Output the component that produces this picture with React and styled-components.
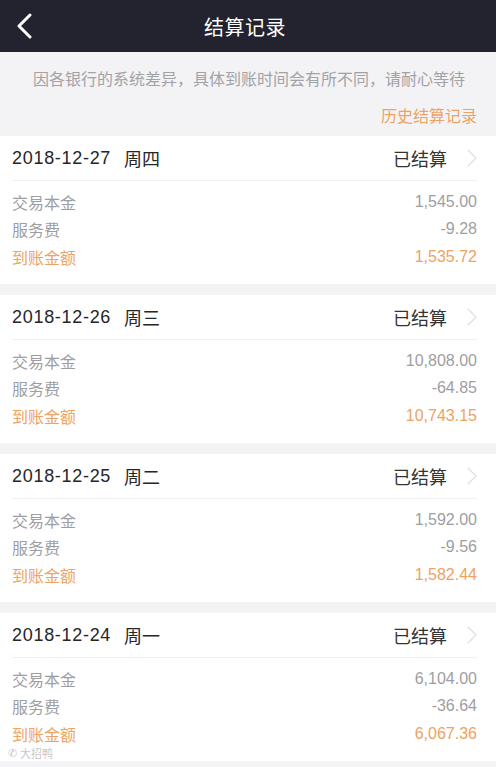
import React from 'react';
import styled, { createGlobalStyle } from 'styled-components';

const GlobalStyle = createGlobalStyle`
  html, body {
    margin: 0;
    padding: 0;
    background: #f3f3f5;
    font-family: "Liberation Sans", "Noto Sans CJK SC", sans-serif;
  }
`;

const Page = styled.div`
  width: 496px;
  min-height: 767px;
  background: #f3f3f5;
  overflow: hidden;
  position: relative;
`;

const TopBar = styled.div`
  height: 52px;
  background: #22232e;
  display: flex;
  align-items: center;
  justify-content: center;
  position: relative;
`;

const BackButton = styled.div`
  position: absolute;
  left: 12px;
  top: 12px;
  width: 24px;
  height: 28px;
  display: flex;
  align-items: center;
  justify-content: center;
`;

const Title = styled.h1`
  margin: 0;
  color: #ffffff;
  font-size: 20px;
  font-weight: 400;
  letter-spacing: 0.5px;
  padding-right: 6px;
`;

const Notice = styled.div`
  padding: 18px 19px 8px 12px;
  display: flex;
  flex-direction: column;
`;

const NoticeText = styled.p`
  margin: 0;
  text-align: center;
  line-height: 20px;
  font-size: 16px;
  color: #a2a2a6;
  padding-left: 9px;
`;

const HistoryLink = styled.a`
  align-self: flex-end;
  margin-top: 16px;
  line-height: 22px;
  font-size: 16px;
  color: #eea263;
  text-decoration: none;
`;

const List = styled.div`
  display: flex;
  flex-direction: column;
  gap: 11px;
`;

const Card = styled.div`
  background: #ffffff;
  padding: 0 19px 13.5px 12px;
`;

const CardHead = styled.div`
  height: 44px;
  display: flex;
  align-items: center;
  border-bottom: 1px solid #f0f0f2;
`;

const DateText = styled.span`
  font-size: 18px;
  color: #262626;
  letter-spacing: 0.7px;
`;

const Weekday = styled.span`
  font-size: 18px;
  color: #262626;
  margin-left: 13px;
`;

const Status = styled.span`
  margin-left: auto;
  font-size: 18px;
  color: #333333;
  margin-right: 19px;
`;

const Chevron = styled.svg`
  width: 12px;
  height: 20px;
  margin-right: -1px;
`;

const Rows = styled.div`
  padding-top: 7px;
`;

const Row = styled.div`
  height: 27.5px;
  display: flex;
  align-items: center;
  justify-content: space-between;
  font-size: 16px;
  color: ${p => (p.$accent ? '#eea263' : '#9e9ea2')};
`;

const Watermark = styled.div`
  position: absolute;
  left: 8px;
  bottom: 6px;
  font-size: 11px;
  color: rgba(190, 190, 195, 0.9);
  display: flex;
  align-items: center;
  gap: 3px;
`;

const records = [
  { date: '2018-12-27', day: '周四', base: '1,545.00', fee: '-9.28', net: '1,535.72' },
  { date: '2018-12-26', day: '周三', base: '10,808.00', fee: '-64.85', net: '10,743.15' },
  { date: '2018-12-25', day: '周二', base: '1,592.00', fee: '-9.56', net: '1,582.44' },
  { date: '2018-12-24', day: '周一', base: '6,104.00', fee: '-36.64', net: '6,067.36' },
];

const App = () => (
  <Page>
    <GlobalStyle />
    <TopBar>
      <BackButton>
        <svg width="20" height="26" viewBox="0 0 20 26">
          <path d="M16 2 L5 13 L16 24" fill="none" stroke="#fff" strokeWidth="3" strokeLinecap="round" strokeLinejoin="round" />
        </svg>
      </BackButton>
      <Title>结算记录</Title>
    </TopBar>
    <Notice>
      <NoticeText>因各银行的系统差异，具体到账时间会有所不同，请耐心等待</NoticeText>
      <HistoryLink>历史结算记录</HistoryLink>
    </Notice>
    <List>
      {records.map(r => (
        <Card key={r.date}>
          <CardHead>
            <DateText>{r.date}</DateText>
            <Weekday>{r.day}</Weekday>
            <Status>已结算</Status>
            <Chevron viewBox="0 0 12 20">
              <path d="M2 2 L10 10 L2 18" fill="none" stroke="#e0e0e2" strokeWidth="1.3" strokeLinecap="round" strokeLinejoin="round" />
            </Chevron>
          </CardHead>
          <Rows>
            <Row><span>交易本金</span><span>{r.base}</span></Row>
            <Row><span>服务费</span><span>{r.fee}</span></Row>
            <Row $accent><span>到账金额</span><span>{r.net}</span></Row>
          </Rows>
        </Card>
      ))}
    </List>
    <Watermark>
      <span>✆</span>
      <span>大招鸭</span>
    </Watermark>
  </Page>
);

export default App;
